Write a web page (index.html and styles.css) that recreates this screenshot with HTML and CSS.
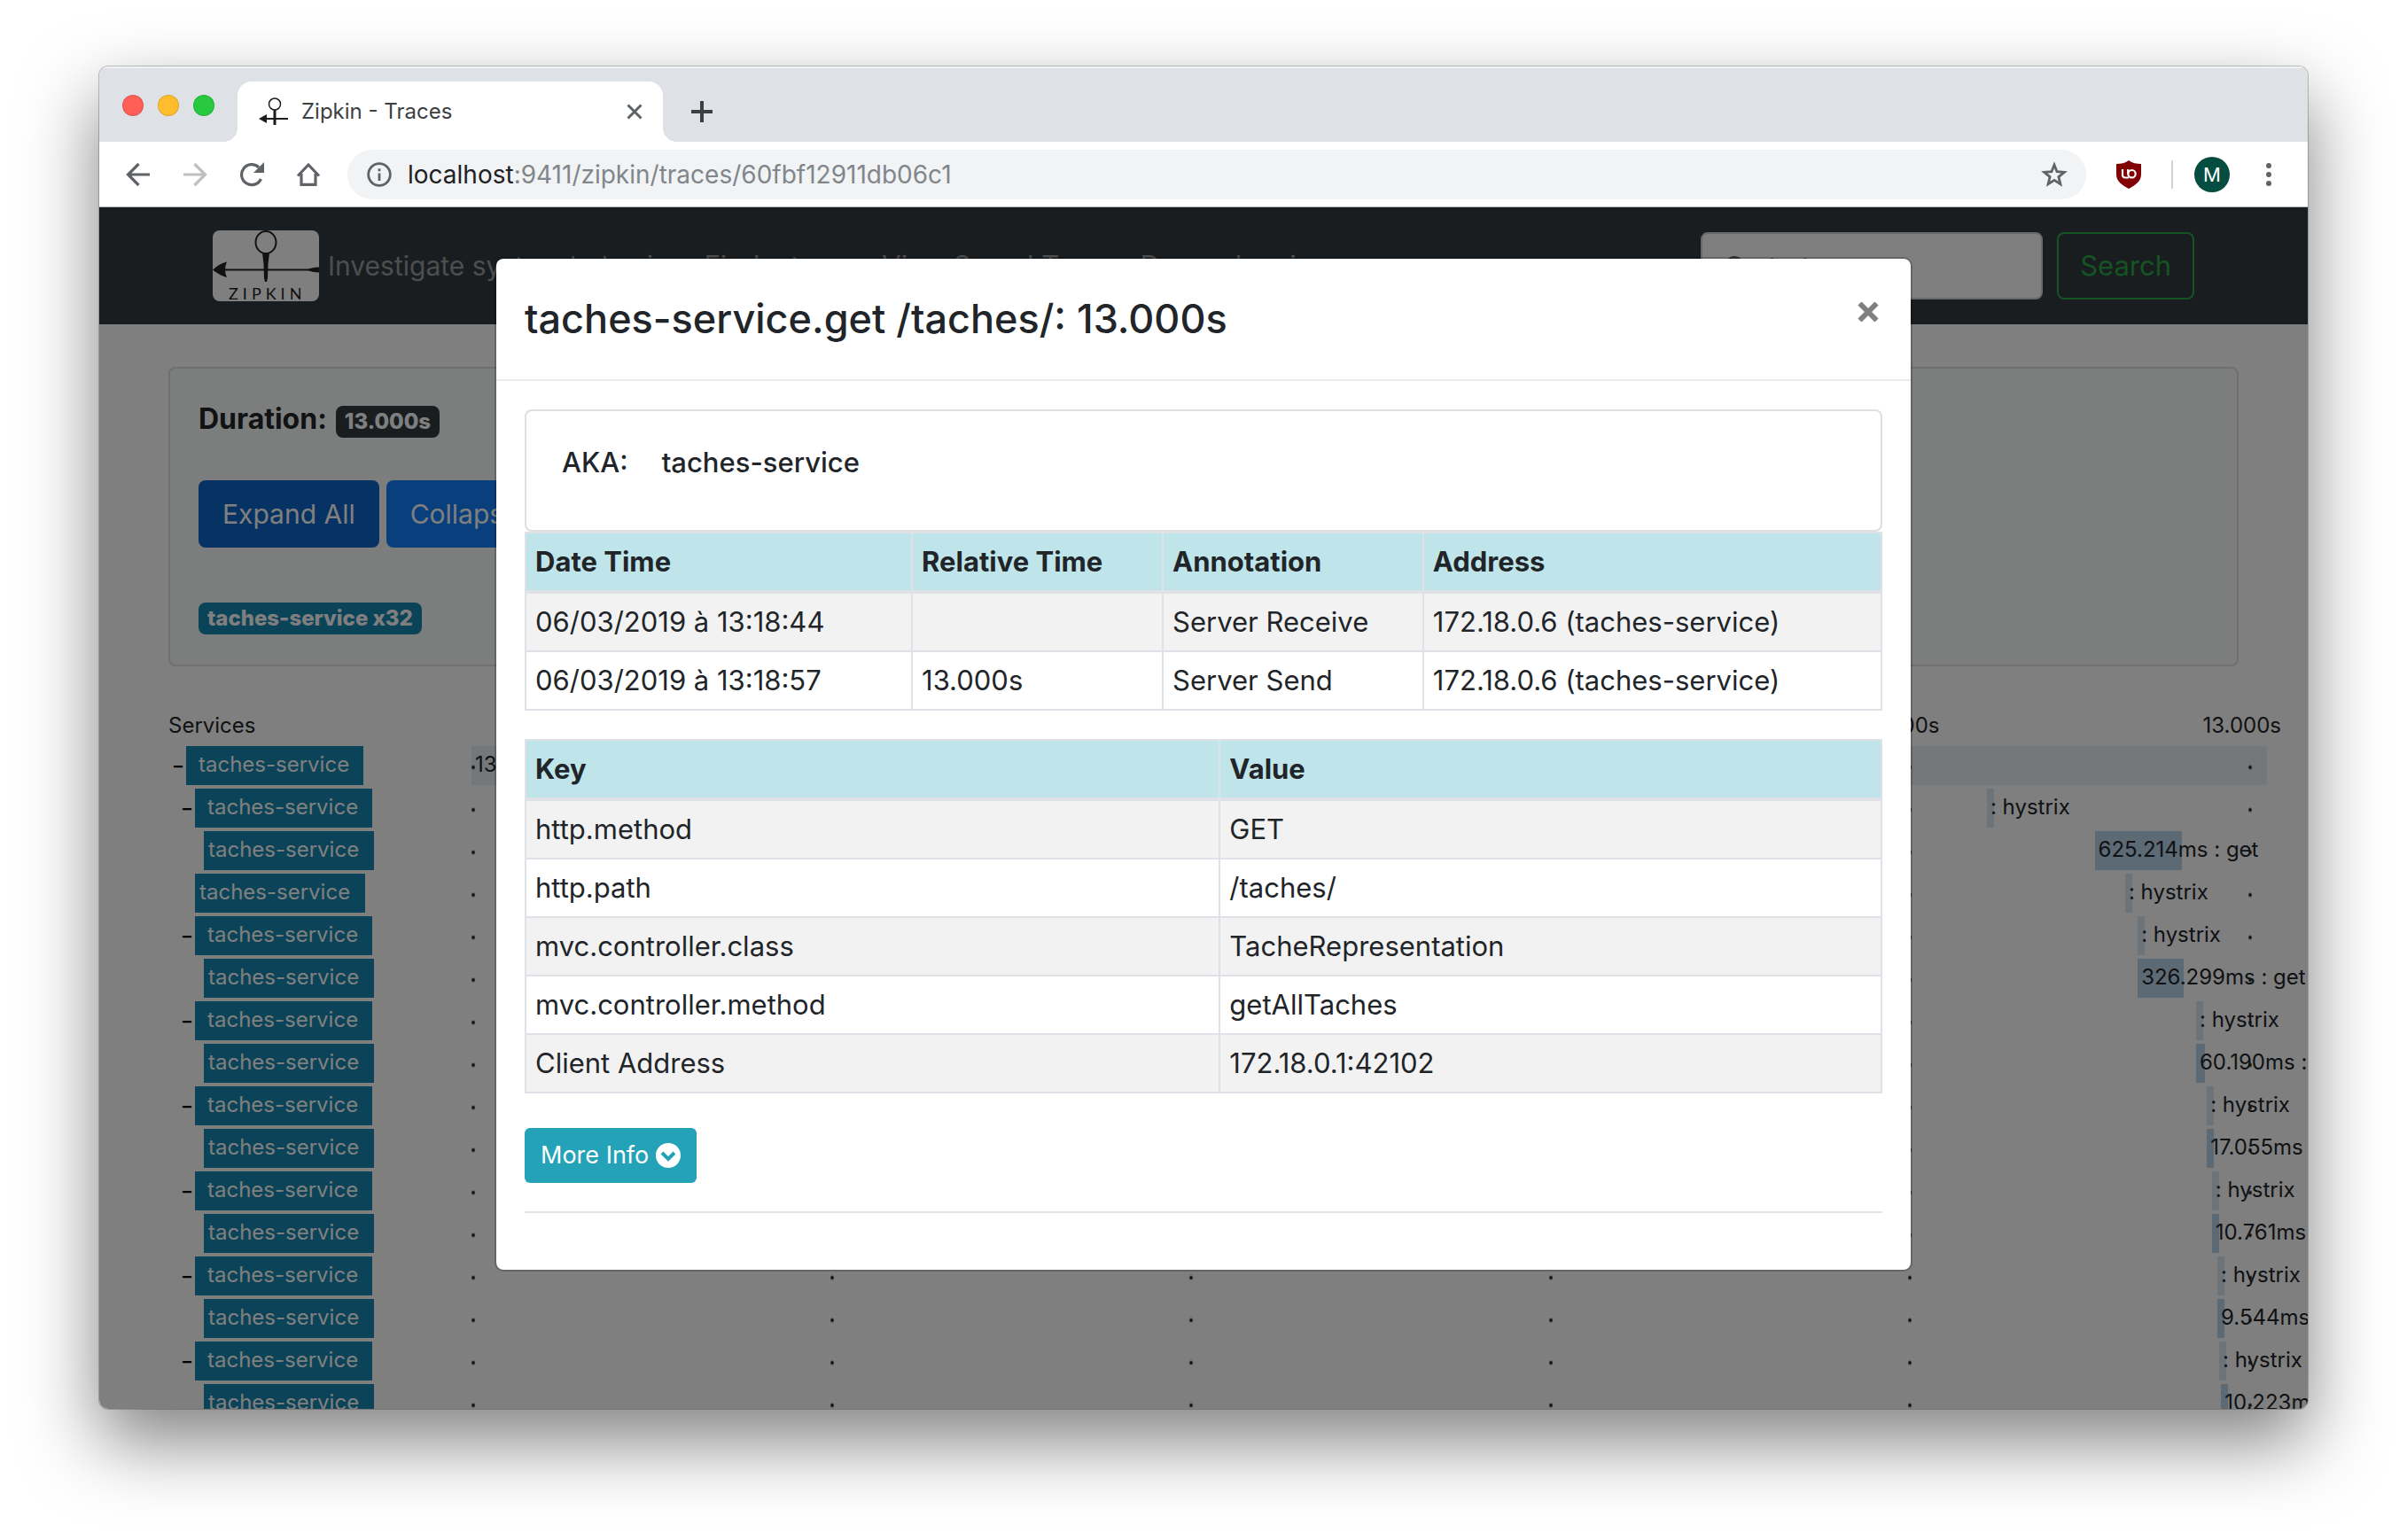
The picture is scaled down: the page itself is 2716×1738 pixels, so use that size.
FILE: index.html
```html
<!DOCTYPE html>
<html lang="en">
<head>
<meta charset="utf-8">
<title>Zipkin - Traces</title>
<link rel="stylesheet" href="styles.css">
</head>
<body>
<div class="window">
  <header class="tabstrip">
    <div class="lights"><span class="light light-red"></span><span class="light light-yellow"></span><span class="light light-green"></span></div>
    <div class="tab">
      <svg class="favicon" viewBox="0 0 34 32" aria-hidden="true"><g fill="none" stroke="#1c1c1c"><circle cx="18" cy="7.500" r="6.500" stroke-width="1.500"/><path d="M18 14v17" stroke-width="3"/><path d="M6 24h27" stroke-width="2"/></g><path d="M0 24l9-5v10z" fill="#1c1c1c"/></svg>
      <span class="tab-title">Zipkin - Traces</span>
      <button class="icon-button tab-close" aria-label="Close tab"><svg width="18" height="18" viewBox="0 0 18 18"><path d="M1.500 1.500l15 15M16.500 1.500l-15 15" stroke="#5f6368" stroke-width="3" fill="none"/></svg></button>
    </div>
    <button class="icon-button new-tab" aria-label="New tab"><svg width="24" height="24" viewBox="0 0 24 24"><path d="M12 0v24M0 12h24" stroke="#3c4043" stroke-width="4" fill="none"/></svg></button>
  </header>
  <div class="toolbar">
    <div class="nav-buttons">
      <button class="icon-button" aria-label="Back"><svg width="28" height="28" viewBox="0 0 28 28"><path d="M27 14H3M14.500 2L2.500 14l12 12" stroke="#5f6368" stroke-width="3.200" fill="none"/></svg></button>
      <button class="icon-button" aria-label="Forward"><svg width="28" height="28" viewBox="0 0 28 28"><path d="M1 14h24M13.500 2l12 12-12 12" stroke="#bdbfc1" stroke-width="3.200" fill="none"/></svg></button>
      <button class="icon-button" aria-label="Reload"><svg width="28" height="28" viewBox="0 0 28 28"><path d="M24.500 19A11.500 11.500 0 1 1 22 5.800" stroke="#5f6368" stroke-width="3.200" fill="none"/><path d="M28 0v12H16z" fill="#5f6368"/></svg></button>
      <button class="icon-button" aria-label="Home"><svg width="28" height="28" viewBox="0 0 28 28"><path d="M2 15.500L14 3l12 12.500M6 13v12.400h16V13" stroke="#5f6368" stroke-width="3.200" fill="none"/></svg></button>
    </div>
    <div class="address">
      <svg width="28" height="28" viewBox="0 0 28 28" aria-hidden="true"><circle cx="14" cy="14" r="12.300" stroke="#5f6368" stroke-width="2.800" fill="none"/><path d="M14 12.500V21M14 7.200v3" stroke="#5f6368" stroke-width="2.800"/></svg>
      <span class="url">localhost<span class="url-path">:9411/zipkin/traces/60fbf12911db06c1</span></span>
      <button class="icon-button" aria-label="Bookmark"><svg width="30" height="30" viewBox="0 0 30 30"><path d="M15 4l3 7.700 8.300.600-6.400 5.300 2 8.200-6.900-4.400-6.900 4.400 2-8.200-6.400-5.300 8.300-.600z" stroke="#5f6368" stroke-width="2.800" fill="none"/></svg></button>
    </div>
    <svg class="shield" width="30" height="32" viewBox="0 0 30 32" aria-hidden="true"><path d="M15 0c4 3 9 4 14 4v12c0 8-7 12-14 16C8 28 1 24 1 16V4c5 0 10-1 14-4z" fill="#800004"/><path d="M8 10v6a3 3 0 0 0 3 3.500h4M14.200 10v5" stroke="#fff" stroke-width="2.200" fill="none"/><circle cx="18.500" cy="15.200" r="4.200" stroke="#fff" stroke-width="2.200" fill="none"/></svg>
    <span class="divider"></span>
    <span class="avatar">M</span>
    <button class="icon-button" aria-label="Menu"><svg width="8" height="28" viewBox="0 0 8 28"><g fill="#5f6368"><circle cx="4" cy="4" r="3"/><circle cx="4" cy="14" r="3"/><circle cx="4" cy="24" r="3"/></g></svg></button>
  </div>

  <div class="page">
    <nav class="navbar">
      <svg class="logo" viewBox="0 0 120 80" role="img" aria-label="Zipkin"><rect width="120" height="80" rx="8" fill="#fff"/><ellipse cx="60" cy="13.500" rx="11.500" ry="12.500" fill="none" stroke="#222" stroke-width="2"/><path d="M56 25.500h8L62.500 38l-.5 16-1 4h-2l-1-4-.5-16z" fill="#222"/><path d="M10 44.500h110" stroke="#222" stroke-width="2"/><path d="M0 44.500Q8 37 16 35.500q-4 9 0 17.500Q8 51 0 44.500zM106 44.500q6-3 14-3v6q-8 0-14-3z" fill="#222"/><text x="18" y="78" class="logo-text">ZIPKIN</text></svg>
      <span class="tagline">Investigate system behavior</span>
      <a class="nav-link" href="#">Find a trace</a>
      <a class="nav-link" href="#">View Saved Trace</a>
      <a class="nav-link" href="#">Dependencies</a>
      <form class="search">
        <input class="search-input" type="text" placeholder="Go to trace" aria-label="Go to trace">
        <button class="search-button" type="button">Search</button>
      </form>
    </nav>

    <section class="summary">
      <div class="duration">Duration: <span class="badge badge-dark">13.000s</span></div>
      <div class="actions"><button class="action action-active">Expand All</button><button class="action">Collapse All</button></div>
      <div class="service-badges"><span class="badge badge-service">taches-service x32</span></div>
    </section>

    <section class="trace">
      <div class="ruler"><span class="ruler-title">Services</span><span>10.400s</span><span>13.000s</span></div>
      <div class="rows">
        <div class="row"><button class="expander">–</button><span class="service">taches-service</span><div class="lane"><span class="bar bar-root" style="left:0%;width:100%">13.000s</span></div></div>
        <div class="row depth-1"><button class="expander">–</button><span class="service">taches-service</span><div class="lane"><span class="bar" style="left:84.4%;width:.4%">: hystrix</span></div></div>
        <div class="row depth-2"><span class="service leaf">taches-service</span><div class="lane"><span class="bar bar-get" style="left:90.4%;width:4.85%">625.214ms : get</span></div></div>
        <div class="row depth-1"><span class="service leaf">taches-service</span><div class="lane"><span class="bar" style="left:92.1%;width:.4%">: hystrix</span></div></div>
        <div class="row depth-1"><button class="expander">–</button><span class="service">taches-service</span><div class="lane"><span class="bar" style="left:92.8%;width:.4%">: hystrix</span></div></div>
        <div class="row depth-2"><span class="service leaf">taches-service</span><div class="lane"><span class="bar bar-get" style="left:92.8%;width:2.55%">326.299ms : get</span></div></div>
        <div class="row depth-1"><button class="expander">–</button><span class="service">taches-service</span><div class="lane"><span class="bar" style="left:96.05%;width:.4%">: hystrix</span></div></div>
        <div class="row depth-2"><span class="service leaf">taches-service</span><div class="lane"><span class="bar bar-get" style="left:96.05%;width:.5%">60.190ms : get</span></div></div>
        <div class="row depth-1"><button class="expander">–</button><span class="service">taches-service</span><div class="lane"><span class="bar" style="left:96.65%;width:.4%">: hystrix</span></div></div>
        <div class="row depth-2"><span class="service leaf">taches-service</span><div class="lane"><span class="bar bar-get" style="left:96.65%;width:.4%">17.055ms</span></div></div>
        <div class="row depth-1"><button class="expander">–</button><span class="service">taches-service</span><div class="lane"><span class="bar" style="left:96.93%;width:.4%">: hystrix</span></div></div>
        <div class="row depth-2"><span class="service leaf">taches-service</span><div class="lane"><span class="bar bar-get" style="left:96.93%;width:.4%">10.761ms</span></div></div>
        <div class="row depth-1"><button class="expander">–</button><span class="service">taches-service</span><div class="lane"><span class="bar" style="left:97.24%;width:.4%">: hystrix</span></div></div>
        <div class="row depth-2"><span class="service leaf">taches-service</span><div class="lane"><span class="bar bar-get" style="left:97.24%;width:.4%">9.544ms</span></div></div>
        <div class="row depth-1"><button class="expander">–</button><span class="service">taches-service</span><div class="lane"><span class="bar" style="left:97.34%;width:.4%">: hystrix</span></div></div>
        <div class="row depth-2"><span class="service leaf">taches-service</span><div class="lane"><span class="bar bar-get" style="left:97.44%;width:.4%">10.223ms</span></div></div>
        <div class="ticks" aria-hidden="true"><i></i><i></i><i></i><i></i><i class="tick-last"></i></div>
      </div>
    </section>

    <div class="backdrop">
      <div class="modal" role="dialog" aria-labelledby="modal-title">
        <header class="modal-header">
          <h4 class="modal-title" id="modal-title">taches-service.get /taches/: 13.000s</h4>
          <button class="icon-button modal-close" aria-label="Close"><svg width="24" height="24" viewBox="0 0 24 24"><path d="M2.500 2.500l19 19M21.500 2.500l-19 19" stroke="#808080" stroke-width="6" fill="none"/></svg></button>
        </header>
        <div class="modal-body">
          <div class="aka"><span>AKA:</span><span>taches-service</span></div>
          <table class="data">
            <colgroup><col class="col-date"><col class="col-relative"><col class="col-annotation"><col></colgroup>
            <thead><tr><th>Date Time</th><th>Relative Time</th><th>Annotation</th><th>Address</th></tr></thead>
            <tbody>
              <tr><td>06/03/2019 à 13:18:44</td><td></td><td>Server Receive</td><td>172.18.0.6 (taches-service)</td></tr>
              <tr><td>06/03/2019 à 13:18:57</td><td>13.000s</td><td>Server Send</td><td>172.18.0.6 (taches-service)</td></tr>
            </tbody>
          </table>
          <table class="data">
            <colgroup><col class="col-key"><col></colgroup>
            <thead><tr><th>Key</th><th>Value</th></tr></thead>
            <tbody>
              <tr><td>http.method</td><td>GET</td></tr>
              <tr><td>http.path</td><td>/taches/</td></tr>
              <tr><td>mvc.controller.class</td><td>TacheRepresentation</td></tr>
              <tr><td>mvc.controller.method</td><td>getAllTaches</td></tr>
              <tr><td>Client Address</td><td>172.18.0.1:42102</td></tr>
            </tbody>
          </table>
          <button class="more">More Info <svg width="28" height="28" viewBox="0 0 28 28" aria-hidden="true"><circle cx="14" cy="14" r="14" fill="#fff"/><path d="M7 11l7 7 7-7" stroke="#24a2b7" stroke-width="4" fill="none"/></svg></button>
          <hr class="rule">
        </div>
      </div>
    </div>
  </div>
</div>
</body>
</html>
```
FILE: styles.css
```css
* { box-sizing: border-box; }

body {
  margin: 0;
  height: 100vh;
  padding: 75px 112px 148px;
  display: flex;
  background: #fff;
  color: #212529;
  font: 31px/48px Inter, "Liberation Sans", sans-serif;
}

button, input { font: inherit; }
button { margin: 0; white-space: nowrap; }

.icon-button {
  display: flex;
  padding: 0;
  border: 0;
  background: none;
}

/* Browser window */
.window {
  flex: 1;
  min-width: 0;
  display: flex;
  flex-direction: column;
  overflow: hidden;
  border-radius: 10px;
  box-shadow: 0 0 0 1px rgba(0, 0, 0, .22), 0 36px 84px rgba(0, 0, 0, .5);
}

.tabstrip {
  display: flex;
  height: 85px;
  padding: 15px 26px 0;
  background: #dee1e6;
  border-top: 2px solid #f0f2f4;
}
.lights { display: flex; gap: 16px; width: 130px; padding-top: 15px; }
.light { width: 24px; height: 24px; border-radius: 50%; border: 1px solid rgba(0, 0, 0, .12); }
.light-red { background: #ff5f57; }
.light-yellow { background: #ffbd2e; }
.light-green { background: #28c940; }

.tab {
  position: relative;
  display: flex;
  align-items: center;
  width: 480px;
  padding: 0 23px 0 24px;
  border-radius: 16px 16px 0 0;
  background: #fff;
  color: #3c4043;
  font-size: 24px;
}
.tab::before, .tab::after {
  content: "";
  position: absolute;
  bottom: 0;
  width: 16px;
  height: 16px;
}
.tab::before { right: 100%; background: radial-gradient(circle at 0 0, transparent 16px, #fff 16px); }
.tab::after { left: 100%; background: radial-gradient(circle at 100% 0, transparent 16px, #fff 16px); }
.favicon { width: 34px; height: 32px; margin-right: 14px; }
.tab-title { flex: 1; }
.new-tab { align-self: center; margin-left: 32px; }

.toolbar {
  display: flex;
  align-items: center;
  height: 74px;
  padding: 0 40px 0 30px;
  background: #fff;
  border-bottom: 1px solid #b6b9bb;
}
.nav-buttons { display: flex; gap: 36px; margin-right: 30px; }
.address {
  flex: 1;
  display: flex;
  align-items: center;
  gap: 18px;
  height: 56px;
  padding: 0 21px 0 22px;
  border-radius: 28px;
  background: #f1f3f4;
}
.url { flex: 1; color: #202124; font-size: 28px; }
.url-path { color: #80868b; }
.shield { margin: 0 33px; }
.divider { width: 2px; height: 32px; background: #cfd1d3; }
.avatar {
  width: 40px;
  height: 40px;
  margin: 0 40px 0 24px;
  border-radius: 50%;
  background: #054d40;
  color: #fff;
  font-size: 22px;
  line-height: 40px;
  text-align: center;
}

/* Zipkin page */
.page {
  position: relative;
  flex: 1;
  min-height: 0;
  overflow: hidden;
  background: #fff;
}
.navbar {
  display: flex;
  align-items: center;
  height: 132px;
  padding: 0 128px;
  background: #343a40;
  color: #999da0;
}
.logo { width: 120px; height: 80px; margin-right: 10px; }
.logo-text { font: 18px Lato, sans-serif; letter-spacing: 5px; fill: #222; }
.tagline { font-size: 30px; }
.nav-link { margin-left: 28px; color: #999da0; text-decoration: none; }
.search { display: flex; gap: 16px; margin-left: auto; }
.search-input {
  width: 386px;
  height: 76px;
  padding: 0 24px;
  border: 2px solid #ced4da;
  border-radius: 8px;
  background: #fff;
}
.search-input::placeholder { color: #6c757d; opacity: 1; }
.search-button {
  height: 76px;
  padding: 0 24px;
  border: 2px solid #28a745;
  border-radius: 8px;
  background: none;
  color: #28a745;
}

.summary {
  margin: 48px 78px 0;
  padding: 33px 32px 34px;
  border: 2px solid #dfdfdf;
  border-radius: 8px;
  background: #f8fbfa;
}
.duration { display: flex; align-items: baseline; gap: 10px; font-size: 32px; font-weight: 700; }
.badge {
  display: inline-block;
  padding: 0 10px;
  border-radius: 8px;
  color: #fff;
  font-size: 24px;
  font-weight: 800;
  line-height: 36px;
}
.badge-dark { background: #343a40; }
.badge-service { background: #1686b0; }
.actions { display: flex; gap: 8px; margin: 45px 0 62px; }
.action {
  height: 76px;
  padding: 0 27px;
  border: 0;
  border-radius: 8px;
  background: #147efb;
  color: #fff;
  font-size: 30px;
}
.action-active { background: #0c64c8; }
.service-badges { display: flex; }

.trace {
  padding: 49px 46px 0 78px;
  font-size: 24px;
  line-height: 36px;
}
.ruler { display: flex; gap: 297px; margin: 0 -16px 5px 0; }
.ruler-title { flex: 1; }
.rows { position: relative; display: grid; gap: 4px; margin-left: 2px; }
.row { display: flex; height: 44px; line-height: 42px; white-space: nowrap; }
.depth-1 { padding-left: 10px; }
.depth-2 { padding-left: 20px; }
.expander {
  width: 18px;
  padding: 0;
  border: 0;
  background: none;
  color: #000;
  font-size: 20px;
  font-weight: 700;
  line-height: 44px;
  text-align: center;
}
.service { width: 200px; padding-left: 14px; background: #1686b0; color: #fff; }
.leaf { width: 192px; margin-left: 18px; padding-left: 5px; }
.lane { position: absolute; left: 340px; right: 0; height: 44px; }
.bar { position: absolute; height: 44px; padding-left: 4px; background: #d8e8f5; }
.bar-root { background: #e9f0f6; }
.bar-get { background: #b8d4ec; }
.ticks {
  position: absolute;
  inset: 0 0 0 340px;
  display: grid;
  grid-template-columns: repeat(5, 1fr);
}
.ticks i, .tick-last::after {
  width: 4px;
  background: radial-gradient(circle at 2px 24px, #222 1px, transparent 3px) 0 0 / 4px 48px;
}
.ticks .tick-last { display: flex; width: auto; padding-right: 17px; background-repeat: repeat-y; }
.tick-last::after { content: ""; margin-left: auto; }

/* Span details */
.backdrop {
  position: absolute;
  inset: 0;
  display: flex;
  justify-content: center;
  align-items: flex-start;
  padding-top: 56px;
  background: rgba(0, 0, 0, .5);
}
.modal {
  width: 1600px;
  max-width: 100%;
  border: 2px solid rgba(0, 0, 0, .2);
  border-radius: 10px;
  background: #fff;
  background-clip: padding-box;
}
.modal-header {
  display: flex;
  justify-content: space-between;
  padding: 32px 36px 32px 32px;
  border-bottom: 2px solid #e9ecef;
}
.modal-title { margin: 0; font-size: 45px; font-weight: 500; line-height: 72px; }
.modal-close { margin-top: 16px; align-self: flex-start; }
.modal-body { padding: 32px 32px 64px; }
.aka {
  display: flex;
  gap: 38px;
  padding: 34px 40px 52px;
  border: 2px solid #dfdfdf;
  border-radius: 8px;
  font-weight: 500;
}
.data {
  width: 100%;
  margin-bottom: 32px;
  border-collapse: collapse;
  table-layout: fixed;
}
.data th, .data td { padding: 8px 10px; border: 2px solid #dee2e6; text-align: left; }
.data th { background: #bfe5ea; border-bottom-width: 4px; font-weight: 700; }
.data td { height: 66px; }
.data tbody tr:nth-child(odd) { background: #f2f2f2; }
.col-date { width: 28.5%; }
.col-relative { width: 18.5%; }
.col-annotation { width: 19.2%; }
.col-key { width: 51.2%; }
.more {
  display: flex;
  align-items: center;
  gap: 8px;
  height: 62px;
  margin-top: 39px;
  padding: 0 18px;
  border: 0;
  border-radius: 6px;
  background: #24a2b7;
  color: #fff;
  font-size: 27px;
}
.rule { margin: 32px 0 0; border: 0; border-top: 2px solid #e5e5e5; }
```
